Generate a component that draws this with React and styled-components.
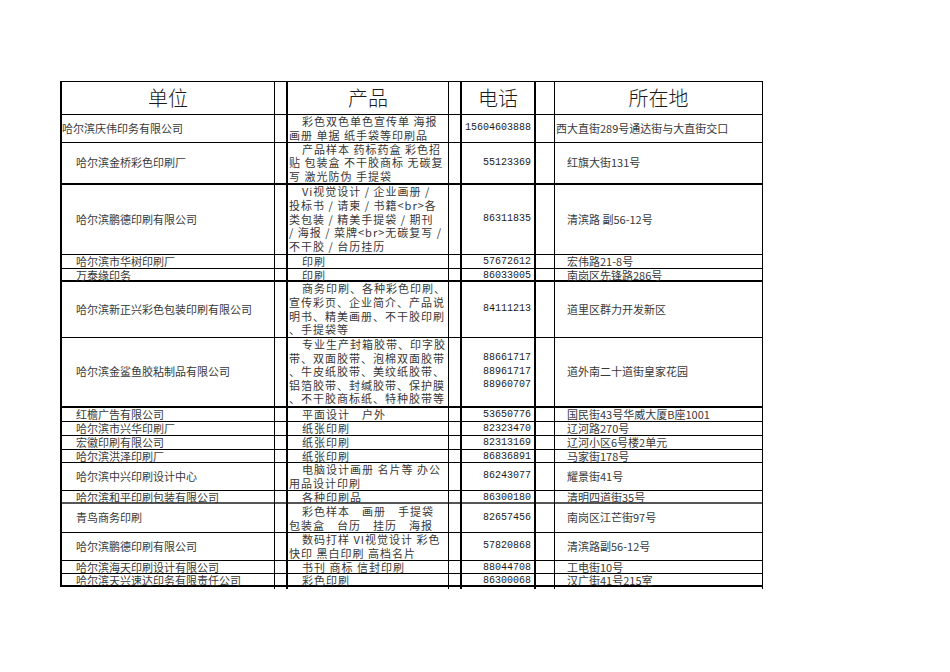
import React from "react";
import styled, { createGlobalStyle } from "styled-components";

const Global = createGlobalStyle`
  html, body { margin: 0; padding: 0; background: #fff; }
  body { font-family: "Noto Sans CJK SC", "Liberation Sans", sans-serif; }
`;

const COLS = "213px 13px 161px 13px 74px 19px 208px";

const Page = styled.div`
  width: 950px;
  height: 672px;
  padding: 81px 0 0 60px;
  box-sizing: border-box;
`;

const Table = styled.div`
  width: 703px;
  border-top: 1px solid #000;
  border-left: 2px solid #000;
  box-sizing: border-box;
`;

const Row = styled.div`
  display: grid;
  grid-template-columns: ${COLS};
  height: ${(p) => p.$h}px;
  border-bottom: ${(p) => p.$b || 1}px solid ${(p) => (p.$grey ? "#555" : "#000")};
  box-sizing: border-box;
`;

const BaseCell = styled.div`
  box-sizing: border-box;
  border-right: ${(p) => p.$bw || 1}px solid #000;
  display: flex;
  align-items: center;
  min-width: 0;
  overflow: visible;
  white-space: nowrap;
  color: #383838;
  font-size: 11px;
  line-height: 12px;
`;

const HeaderCell = styled(BaseCell)`
  justify-content: center;
  font-size: 20px;
  line-height: 24px;
  color: #1a1a1a;
  font-weight: 300;
`;

const GapCell = styled(BaseCell)``;

const UnitCell = styled(BaseCell)`
  padding-left: ${(p) => (p.$indent ? 14 : 0)}px;
  padding-bottom: 2px;
`;

const ProductCell = styled(BaseCell)`
  flex-direction: column;
  align-items: stretch;
  justify-content: center;
  letter-spacing: 1px;
  padding-left: 1px;
  padding-bottom: ${(p) => (p.$single ? 2 : 0)}px;
`;

const ProductLine = styled.div`
  height: ${(p) => p.$lh}px;
  line-height: ${(p) => p.$lh}px;
  padding-left: ${(p) => (p.$first ? 13 : 0)}px;
`;

const PhoneCell = styled(BaseCell)`
  flex-direction: column;
  align-items: flex-end;
  justify-content: center;
  padding-right: 3px;
  padding-bottom: 1px;
  font-family: "Liberation Mono", monospace;
  font-size: 10px;
  color: #1c1c1c;
  line-height: 13.6px;
`;

const AddrCell = styled(BaseCell)`
  padding-left: ${(p) => (p.$indent ? 12 : 1)}px;
  padding-bottom: 2px;
`;

const rows = [
  { h: 28, unit: "哈尔滨庆伟印务有限公司", ui: false, prod: ["彩色双色单色宣传单 海报", "画册 单据 纸手袋等印刷品"], phone: ["15604603888"], addr: "西大直街289号通达街与大直街交口", ai: false },
  { h: 42, b: 2, unit: "哈尔滨金桥彩色印刷厂", prod: ["产品样本 药标药盒 彩色招", "贴 包装盒 不干胶商标 无碳复", "写 激光防伪 手提袋"], phone: ["55123369"], addr: "红旗大街131号" },
  { h: 70, unit: "哈尔滨鹏德印刷有限公司", prod: ["Vi视觉设计 / 企业画册 /", "投标书 / 请柬 / 书籍<br>各", "类包装 / 精美手提袋 / 期刊", "/ 海报 / 菜牌<br>无碳复写 /", "不干胶 / 台历挂历"], phone: ["86311835"], addr: "清滨路 副56-12号" },
  { h: 14, unit: "哈尔滨市华树印刷厂", prod: ["印刷"], phone: ["57672612"], addr: "宏伟路21-8号" },
  { h: 13, b: 2, unit: "万泰缘印务", prod: ["印刷"], phone: ["86033005"], addr: "南岗区先锋路286号" },
  { h: 56, unit: "哈尔滨新正兴彩色包装印刷有限公司", prod: ["商务印刷、各种彩色印刷、", "宣传彩页、企业简介、产品说", "明书、精美画册、不干胶印刷", "、手提袋等"], phone: ["84111213"], addr: "道里区群力开发新区" },
  { h: 70, b: 2, unit: "哈尔滨金鲨鱼胶粘制品有限公司", prod: ["专业生产封箱胶带、印字胶", "带、双面胶带、泡棉双面胶带", "、牛皮纸胶带、美纹纸胶带、", "铝箔胶带、封缄胶带、保护膜", "、不干胶商标纸、特种胶带等"], phone: ["88661717", "88961717", "88960707"], addr: "道外南二十道街皇家花园" },
  { h: 14, unit: "红檐广告有限公司", prod: [" 平面设计　户外"], phone: ["53650776"], addr: "国民街43号华威大厦B座1001" },
  { h: 14, unit: "哈尔滨市兴华印刷厂", prod: ["纸张印刷"], phone: ["82323470"], addr: "辽河路270号" },
  { h: 14, unit: "宏徽印刷有限公司", prod: ["纸张印刷"], phone: ["82313169"], addr: "辽河小区6号楼2单元" },
  { h: 13, unit: "哈尔滨洪泽印刷厂", prod: ["纸张印刷"], phone: ["86836891"], addr: "马家街178号" },
  { h: 28, unit: "哈尔滨中兴印刷设计中心", prod: ["电脑设计画册 名片等 办公", "用品设计印刷"], phone: ["86243077"], addr: "耀景街41号" },
  { h: 13, b: 2, grey: true, unit: "哈尔滨和平印刷包装有限公司", prod: ["各种印刷品"], phone: ["86300180"], addr: "清明四道街35号" },
  { h: 29, unit: "青鸟商务印刷", prod: ["彩色样本　画册　手提袋", "包装盒　台历　挂历　海报"], phone: ["82657456"], addr: "南岗区江芒街97号" },
  { h: 28, unit: "哈尔滨鹏德印刷有限公司", prod: ["数码打样 VI视觉设计 彩色", "快印 黑白印刷 高档名片"], phone: ["57820868"], addr: "清滨路副56-12号" },
  { h: 13, unit: "哈尔滨海天印刷设计有限公司", prod: ["书刊 商标 信封印刷"], phone: ["88044708"], addr: "工电街10号" },
  { h: 13, b: 2, unit: "哈尔滨天兴速达印务有限责任公司", prod: ["彩色印刷"], phone: ["86300068"], addr: "汉广街41号215室" },
];

export default function App() {
  return (
    <Page>
      <Global />
      <Table>
        <Row $h={33}>
          <HeaderCell $bw={1}>单位</HeaderCell>
          <GapCell $bw={2} />
          <HeaderCell $bw={1}>产品</HeaderCell>
          <GapCell $bw={2} />
          <HeaderCell $bw={2}>电话</HeaderCell>
          <GapCell $bw={1} />
          <HeaderCell $bw={1}>所在地</HeaderCell>
        </Row>
        {rows.map((r, i) => {
          const single = r.prod.length === 1;
          const lh = single ? 12 : Math.min(14, (r.h - (r.b || 1)) / r.prod.length);
          return (
            <Row key={i} $h={r.h} $b={r.b} $grey={r.grey}>
              <UnitCell $bw={1} $indent={r.ui !== false}>{r.unit}</UnitCell>
              <GapCell $bw={2} />
              <ProductCell $bw={1} $single={single}>
                {r.prod.map((l, j) => (
                  <ProductLine key={j} $first={j === 0} $lh={lh}>{l}</ProductLine>
                ))}
              </ProductCell>
              <GapCell $bw={2} />
              <PhoneCell $bw={2}>
                {r.phone.map((p, j) => (
                  <div key={j}>{p}</div>
                ))}
              </PhoneCell>
              <GapCell $bw={1} />
              <AddrCell $bw={1} $indent={r.ai !== false}>{r.addr}</AddrCell>
            </Row>
          );
        })}
      </Table>
    </Page>
  );
}
